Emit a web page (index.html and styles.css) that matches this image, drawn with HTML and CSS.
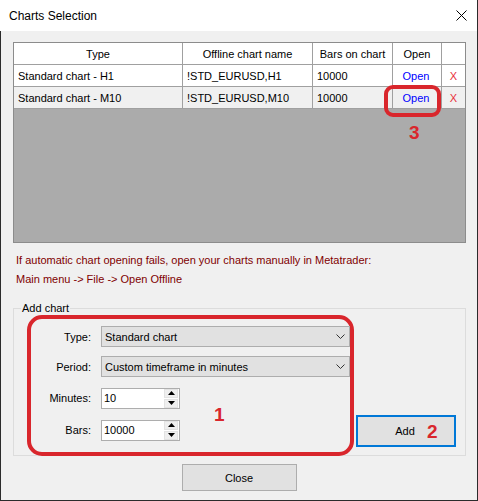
FILE: index.html
```html
<!DOCTYPE html>
<html lang="en">
<head>
    <meta charset="UTF-8">
    <title>Charts Selection</title>
    <link rel="stylesheet" href="styles.css">
</head>
<body>
    <div class="window">
        <div class="titlebar">
            <span class="title">Charts Selection</span>
            <svg class="close-x" width="11" height="11" viewBox="0 0 11 11">
                <path d="M0.5 0.5 L10.5 10.5 M10.5 0.5 L0.5 10.5" stroke="#000" stroke-width="1" fill="none"/>
            </svg>
        </div>
        <div class="content">
            <div class="grid-wrap">
                <table class="grid">
                    <thead>
                        <tr>
                            <th class="c-type">Type</th>
                            <th class="c-name">Offline chart name</th>
                            <th class="c-bars">Bars on chart</th>
                            <th class="c-open">Open</th>
                            <th class="c-del"></th>
                        </tr>
                    </thead>
                    <tbody>
                        <tr>
                            <td>Standard chart - H1</td>
                            <td>!STD_EURUSD,H1</td>
                            <td>10000</td>
                            <td class="open">Open</td>
                            <td class="del">X</td>
                        </tr>
                        <tr class="alt">
                            <td>Standard chart - M10</td>
                            <td>!STD_EURUSD,M10</td>
                            <td>10000</td>
                            <td class="open">
                                <div class="mark">
                                    Open
                                    <span class="mark-box"></span>
                                    <span class="mark-num num-3">3</span>
                                </div>
                            </td>
                            <td class="del">X</td>
                        </tr>
                    </tbody>
                </table>
            </div>

            <div class="info">
                <div>If automatic chart opening fails, open your charts manually in Metatrader:</div>
                <div>Main menu -&gt; File -&gt; Open Offline</div>
            </div>

            <fieldset class="group">
                <legend>Add chart</legend>
                <div class="group-row">
                    <div class="form-box">
                        <label>Type:</label>
                        <div class="combo">
                            <span>Standard chart</span>
                            <svg width="9" height="5" viewBox="0 0 9 5"><polyline points="0.5,0.5 4.5,4.5 8.5,0.5" fill="none" stroke="#333" stroke-width="1"/></svg>
                        </div>
                        <label>Period:</label>
                        <div class="combo">
                            <span>Custom timeframe in minutes</span>
                            <svg width="9" height="5" viewBox="0 0 9 5"><polyline points="0.5,0.5 4.5,4.5 8.5,0.5" fill="none" stroke="#333" stroke-width="1"/></svg>
                        </div>
                        <label class="lbl-spin">Minutes:</label>
                        <div class="spin">
                            <span class="spin-val">10</span>
                            <div class="spin-btns">
                                <div class="spin-btn"><svg width="7" height="4" viewBox="0 0 7 4"><polygon points="3.5,0 7,4 0,4" fill="#000"/></svg></div>
                                <div class="spin-btn"><svg width="7" height="4" viewBox="0 0 7 4"><polygon points="0,0 7,0 3.5,4" fill="#000"/></svg></div>
                            </div>
                        </div>
                        <label class="lbl-spin">Bars:</label>
                        <div class="spin">
                            <span class="spin-val">10000</span>
                            <div class="spin-btns">
                                <div class="spin-btn"><svg width="7" height="4" viewBox="0 0 7 4"><polygon points="3.5,0 7,4 0,4" fill="#000"/></svg></div>
                                <div class="spin-btn"><svg width="7" height="4" viewBox="0 0 7 4"><polygon points="0,0 7,0 3.5,4" fill="#000"/></svg></div>
                            </div>
                        </div>
                        <span class="mark-num num-1">1</span>
                    </div>
                    <div class="btn btn-add">
                        Add
                        <span class="mark-num num-2">2</span>
                    </div>
                </div>
            </fieldset>

            <div class="footer">
                <div class="btn btn-close">Close</div>
            </div>
        </div>
    </div>
</body>
</html>
```

FILE: styles.css
```css
* {
    box-sizing: border-box;
}
body {
    margin: 0;
    font-family: 'Liberation Sans', Arial, sans-serif;
    font-size: 11px;
    color: #000000;
    background-color: #f0f0f0;
}
.window {
    width: 478px;
    height: 501px;
    display: flex;
    flex-direction: column;
}
.titlebar {
    height: 31px;
    background-color: #ffffff;
    border-right: 1px solid #2b2b2b;
    display: flex;
    align-items: center;
    justify-content: space-between;
    padding: 1px 10px 0 9px;
}
.title {
    font-size: 12px;
}
.close-x {
    display: block;
    margin-top: -1px;
}
.content {
    flex: 1;
    background-color: #f0f0f0;
    border: 1px solid #2b2b2b;
    border-top: none;
    padding: 11px 11px 0 12px;
    display: flex;
    flex-direction: column;
}

/* grid */
.grid-wrap {
    height: 201px;
    border: 1px solid #8c8c8c;
    background-color: #ababab;
}
.grid {
    width: 451px;
    table-layout: fixed;
    border-collapse: separate;
    border-spacing: 0;
}
.grid th, .grid td {
    height: 22px;
    padding: 0 0 0 4px;
    border-right: 1px solid #a0a0a0;
    border-bottom: 1px solid #a0a0a0;
    background-color: #ffffff;
    font-weight: normal;
    text-align: left;
    white-space: nowrap;
}
.grid th {
    text-align: center;
    padding: 0;
}
.grid .c-type { width: 169px; }
.grid .c-name { width: 130px; }
.grid .c-bars { width: 80px; }
.grid .c-open { width: 49px; }
.grid .c-del { width: 23px; border-right: none; }
.grid td:last-child {
    border-right: none;
}
.grid tr.alt td {
    background-color: #f0f0f0;
}
.grid td.open {
    color: #0000ff;
    text-align: center;
    padding: 0 2px 0 0;
}
.grid td.del {
    color: #e8303a;
    text-align: center;
    padding: 0;
}

/* red annotations */
.mark {
    position: relative;
}
.mark-box {
    position: absolute;
    left: -9px;
    top: -7px;
    width: 57px;
    height: 32px;
    border: 4px solid #d9262c;
    border-radius: 9px;
}
.mark-num {
    position: absolute;
    font-size: 19px;
    line-height: 19px;
    font-weight: bold;
    color: #d9262c;
}
.num-3 {
    left: 16px;
    top: 31px;
}

/* info */
.info {
    margin: 8px 0 12px 3px;
    color: #800000;
    line-height: 19px;
}

/* group box */
.group {
    margin: 0;
    padding: 0 9px 0 13px;
    border: 1px solid #dcdcdc;
    min-width: 0;
    height: 155px;
}
.group legend {
    margin-left: -6px;
    padding: 0 1px;
    line-height: 14px;
}
.group-row {
    display: flex;
    align-items: flex-end;
    gap: 2px;
    height: 141px;
}
.form-box {
    position: relative;
    width: 327px;
    height: 141px;
    border: 4px solid #d9262c;
    border-radius: 15px;
    padding-top: 7px;
    display: grid;
    grid-template-columns: 60px 249px;
    column-gap: 10px;
    grid-auto-rows: 21px;
    row-gap: 9px;
    align-items: center;
}
.form-box label {
    text-align: right;
}
.form-box .lbl-spin {
    margin-top: 0;
}
.combo {
    height: 21px;
    background-color: #e1e1e1;
    border: 1px solid #adadad;
    display: flex;
    align-items: center;
    justify-content: space-between;
    padding: 0 4px 0 3px;
}
.combo svg {
    display: block;
}
.spin {
    width: 79px;
    height: 21px;
    background-color: #ffffff;
    border: 1px solid #adadad;
    display: flex;
    align-items: center;
    justify-content: space-between;
    padding: 0 0 0 2px;
}
.form-box .spin:nth-of-type(3) {
    margin-top: 3px;
}
.form-box label:nth-of-type(3) {
    margin-top: 3px;
}
.form-box .spin:nth-of-type(4), .form-box label:nth-of-type(4) {
    margin-top: 7px;
}
.spin-btns {
    width: 15px;
    height: 19px;
    display: flex;
    flex-direction: column;
    gap: 1px;
    padding: 0 1px 0 0;
}
.spin-btn {
    flex: 1;
    background-color: #efefef;
    border: 1px solid #e3e3e3;
    display: flex;
    align-items: center;
    justify-content: center;
}
.spin-btn svg {
    display: block;
}
.num-1 {
    left: 183px;
    top: 86px;
}

/* buttons */
.btn {
    position: relative;
    background-color: #e1e1e1;
    border: 1px solid #adadad;
    display: flex;
    align-items: center;
    justify-content: center;
}
.btn-add {
    width: 100px;
    height: 32px;
    border: 2px solid #0078d7;
    margin-bottom: 9px;
    padding-right: 2px;
}
.num-2 {
    left: 69px;
    top: 5px;
}
.footer {
    display: flex;
    justify-content: center;
    padding: 8px 0 0 0;
}
.btn-close {
    width: 115px;
    height: 27px;
    margin-right: 1px;
}
```
